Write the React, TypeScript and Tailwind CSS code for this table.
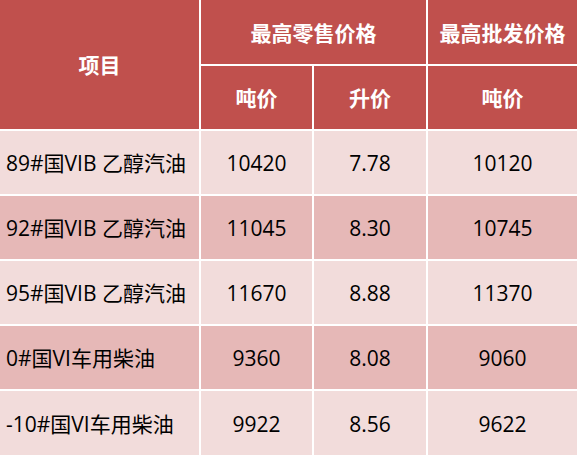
import React from "react";

const rows = [
  { name: "89#国VIB 乙醇汽油", a: "10420", b: "7.78", c: "10120", dark: false },
  { name: "92#国VIB 乙醇汽油", a: "11045", b: "8.30", c: "10745", dark: true },
  { name: "95#国VIB 乙醇汽油", a: "11670", b: "8.88", c: "11370", dark: false },
  { name: "0#国VI车用柴油", a: "9360", b: "8.08", c: "9060", dark: true },
  { name: "-10#国VI车用柴油", a: "9922", b: "8.56", c: "9622", dark: false },
];

export default function App() {
  return (
    <div
      className="w-[579px] h-[455px] bg-white overflow-hidden"
      style={{ fontFamily: '"Open Sans", "Noto Sans CJK SC", sans-serif' }}
    >
      <div className="grid grid-cols-[199px_111px_112px_149px] grid-rows-[64px_63px_63px_63px_63px_63px_65px] gap-[2px] w-[577px] bg-white">
        <div className="row-span-2 bg-[#C0504D] text-white font-bold text-[21px] flex items-center justify-center pt-[3px]">
          项目
        </div>
        <div className="col-span-2 bg-[#C0504D] text-white font-bold text-[21px] flex items-center justify-center pt-[3px]">
          最高零售价格
        </div>
        <div className="bg-[#C0504D] text-white font-bold text-[21px] flex items-center justify-center pt-[3px]">
          最高批发价格
        </div>
        <div className="bg-[#C0504D] text-white font-bold text-[21px] flex items-center justify-center pt-[3px]">
          吨价
        </div>
        <div className="bg-[#C0504D] text-white font-bold text-[21px] flex items-center justify-center pt-[3px]">
          升价
        </div>
        <div className="bg-[#C0504D] text-white font-bold text-[21px] flex items-center justify-center pt-[3px]">
          吨价
        </div>
        {rows.map((r) => {
          const bg = r.dark ? "bg-[#E6B8B7]" : "bg-[#F2DCDB]";
          return (
            <React.Fragment key={r.name}>
              <div className={`${bg} text-black text-[21px] flex items-center pl-[6px] pt-[3px] whitespace-nowrap`}>
                {r.name}
              </div>
              <div className={`${bg} text-black text-[21px] flex items-center justify-center pt-[3px]`}>{r.a}</div>
              <div className={`${bg} text-black text-[21px] flex items-center justify-center pt-[3px]`}>{r.b}</div>
              <div className={`${bg} text-black text-[21px] flex items-center justify-center pt-[3px]`}>{r.c}</div>
            </React.Fragment>
          );
        })}
      </div>
    </div>
  );
}
